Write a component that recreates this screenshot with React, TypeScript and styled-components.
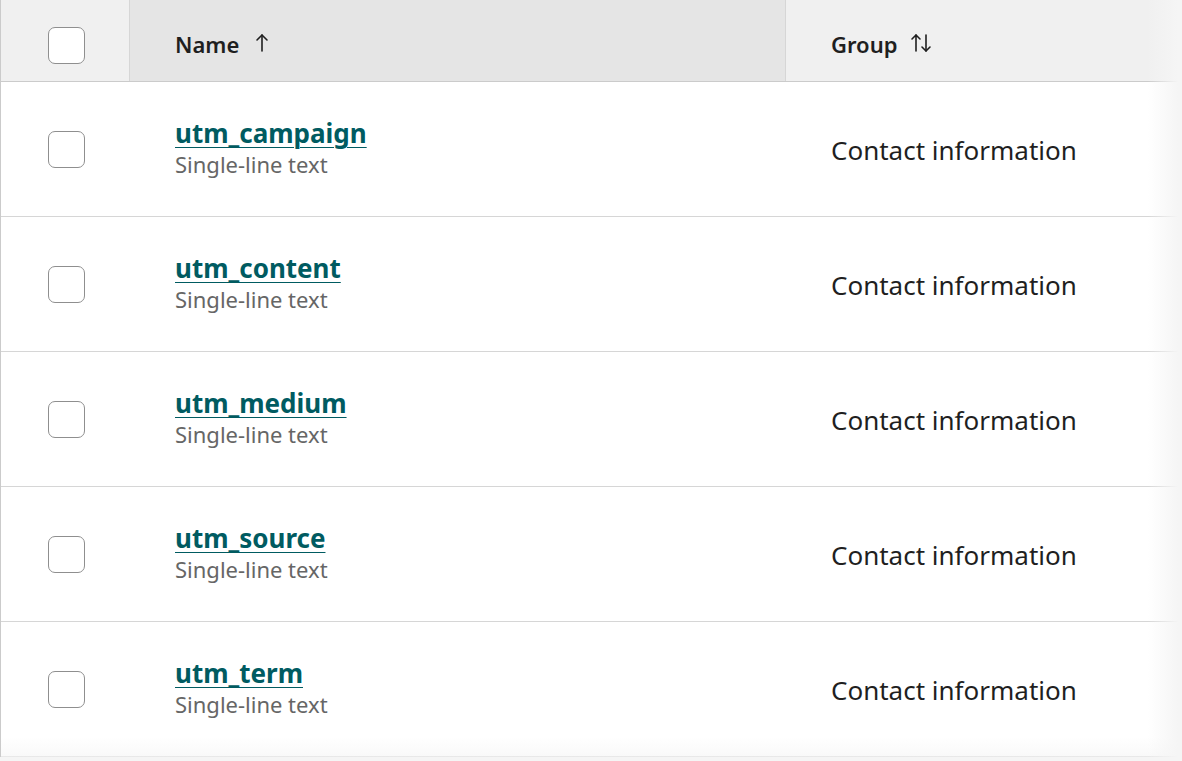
import styled, { createGlobalStyle } from 'styled-components';

interface Property {
  name: string;
  type: string;
  group: string;
}

const properties: Property[] = [
  { name: 'utm_campaign', type: 'Single-line text', group: 'Contact information' },
  { name: 'utm_content', type: 'Single-line text', group: 'Contact information' },
  { name: 'utm_medium', type: 'Single-line text', group: 'Contact information' },
  { name: 'utm_source', type: 'Single-line text', group: 'Contact information' },
  { name: 'utm_term', type: 'Single-line text', group: 'Contact information' },
];

const GlobalStyle = createGlobalStyle`
  body {
    margin: 0;
    background: #f5f5f5;
    font-family: 'Noto Sans', 'Open Sans', sans-serif;
    color: #1f1f1f;
  }
`;

const SortUp = () => (
  <svg width="14" height="20" viewBox="0 0 14 20" fill="none" stroke="#1f1f1f" strokeWidth="1.6" strokeLinecap="round" strokeLinejoin="round">
    <path d="M7 18V2" />
    <path d="M2 7l5-5 5 5" />
  </svg>
);

const SortBoth = () => (
  <svg width="22" height="22" viewBox="0 0 22 22" fill="none" stroke="#1f1f1f" strokeWidth="1.6" strokeLinecap="round" strokeLinejoin="round">
    <path d="M6 19V3" />
    <path d="M2 7l4-4 4 4" />
    <path d="M16 3v16" />
    <path d="M12 15l4 4 4-4" />
  </svg>
);

const App = () => {
  return (
    <>
      <GlobalStyle />
      <Wrapper>
        <Table>
          <HeaderRow>
            <CheckCell $header>
              <Checkbox />
            </CheckCell>
            <HeadCell $sorted $gap={16}>
              Name
              <SortUp />
            </HeadCell>
            <HeadCell $gap={13}>
              Group
              <SortBoth />
            </HeadCell>
          </HeaderRow>
          {properties.map((p) => (
            <Row key={p.name}>
              <CheckCell>
                <Checkbox />
              </CheckCell>
              <NameCell>
                <PropLink href="#">{p.name}</PropLink>
                <PropType>{p.type}</PropType>
              </NameCell>
              <GroupCell>{p.group}</GroupCell>
            </Row>
          ))}
        </Table>
        <Fade />
      </Wrapper>
    </>
  );
};

const Wrapper = styled.div`
  position: relative;
  background: #fff;
  border-left: 1px solid #cbcbcb;
  overflow: hidden;
`;

const Table = styled.div`
  display: flex;
  flex-direction: column;
`;

const HeaderRow = styled.div`
  display: grid;
  grid-template-columns: 129px 656px 1fr;
  height: 81px;
  border-bottom: 1px solid #cbcbcb;
  background: #f0f0f0;
`;

const Row = styled.div`
  display: grid;
  grid-template-columns: 129px 656px 1fr;
  height: 134px;
  border-bottom: 1px solid #d6d6d6;
  background: #fff;
`;

const CheckCell = styled.div<{ $header?: boolean }>`
  display: flex;
  align-items: center;
  padding-left: 47px;
  padding-top: ${(p) => (p.$header ? '9px' : '0')};
  border-right: ${(p) => (p.$header ? '1px solid #d6d6d6' : 'none')};
`;

const Checkbox = styled.span`
  display: block;
  width: 35px;
  height: 35px;
  border: 1px solid #8f8f8f;
  border-radius: 7px;
  background: #fff;
`;

const HeadCell = styled.div<{ $sorted?: boolean; $gap: number }>`
  display: flex;
  align-items: center;
  gap: ${(p) => p.$gap}px;
  padding: 7px 0 0 45px;
  font-size: 22px;
  font-weight: 600;
  color: #1f1f1f;
  background: ${(p) => (p.$sorted ? '#e5e5e5' : '#f0f0f0')};
  border-right: ${(p) => (p.$sorted ? '1px solid #d6d6d6' : 'none')};

  svg {
    margin-top: -2px;
  }
`;

const NameCell = styled.div`
  display: flex;
  flex-direction: column;
  justify-content: center;
  align-items: flex-start;
  padding-left: 45px;
`;

const PropLink = styled.a`
  font-size: 26px;
  font-weight: 700;
  line-height: 30px;
  color: #005b61;
  text-decoration: underline;
  text-decoration-thickness: 1px;
  text-underline-offset: 4px;
`;

const PropType = styled.div`
  font-size: 22px;
  line-height: 32px;
  color: #666;
`;

const GroupCell = styled.div`
  display: flex;
  align-items: center;
  padding-left: 45px;
  padding-top: 2px;
  font-size: 26px;
  color: #1f1f1f;
`;

// scroll shadows on the right and bottom edges of the table
const Fade = styled.div`
  position: absolute;
  inset: 0;
  pointer-events: none;
  background:
    linear-gradient(to right, rgba(245, 245, 245, 0) calc(100% - 34px), rgba(245, 245, 245, 1) calc(100% - 4px)),
    linear-gradient(to bottom, rgba(245, 245, 245, 0) calc(100% - 20px), rgba(245, 245, 245, 0.6) 100%);
`;

export default App;
